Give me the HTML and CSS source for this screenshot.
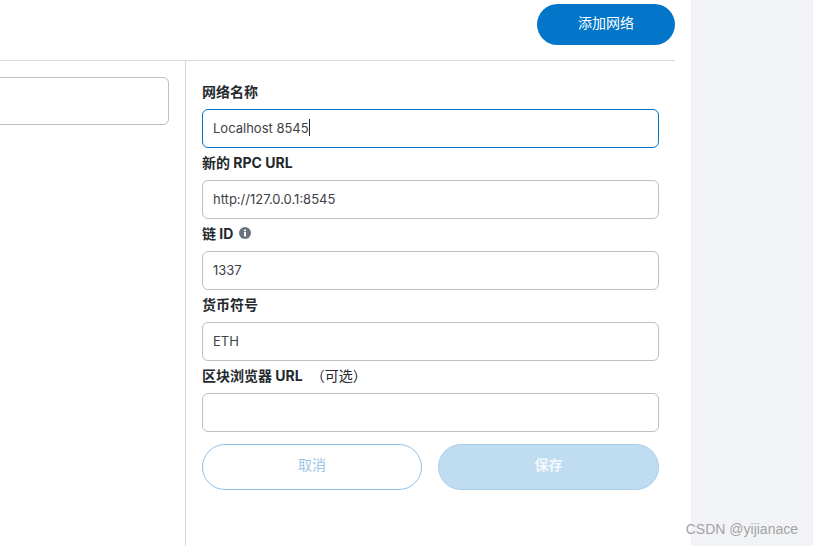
FILE: index.html
```html
<!DOCTYPE html>
<html>
<head>
    <title>添加网络</title>
    <link rel="stylesheet" href="styles.css">
</head>
<body>
    <div class="page">
        <div class="panel">
            <div class="top-bar">
                <button class="btn btn-add">添加网络</button>
            </div>
            <div class="content">
                <div class="network-list">
                    <div class="search-box"></div>
                </div>
                <div class="network-form">
                    <div class="field">
                        <label class="field-label">网络名称</label>
                        <div class="input input-focus">Localhost 8545<span class="caret"></span></div>
                    </div>
                    <div class="field">
                        <label class="field-label">新的 RPC URL</label>
                        <div class="input">http://127.0.0.1:8545</div>
                    </div>
                    <div class="field">
                        <label class="field-label">链 ID<svg class="info-icon" viewBox="0 0 12 12" width="12" height="12">
                                <circle cx="6" cy="6" r="6" fill="#6a737d"/>
                                <rect x="5" y="5" width="2" height="4.4" fill="#fff"/>
                                <rect x="5" y="2.6" width="2" height="1.6" fill="#fff"/>
                            </svg></label>
                        <div class="input">1337</div>
                    </div>
                    <div class="field">
                        <label class="field-label">货币符号</label>
                        <div class="input">ETH</div>
                    </div>
                    <div class="field">
                        <label class="field-label">区块浏览器 URL<span class="optional">（可选）</span></label>
                        <div class="input"></div>
                    </div>
                    <div class="buttons">
                        <button class="btn btn-cancel">取消</button>
                        <button class="btn btn-save">保存</button>
                    </div>
                </div>
            </div>
        </div>
        <div class="side"></div>
    </div>
    <div class="watermark">CSDN @yijianace</div>
</body>
</html>
```

FILE: styles.css
```css
body {
    font-family: Inter, "Noto Sans CJK SC", sans-serif;
    margin: 0;
    height: 546px;
    overflow: hidden;
    background: #f2f3f6;
    color: #24292e;
}
.page {
    display: flex;
    height: 546px;
}
.panel {
    width: 691px;
    padding-right: 16px;
    box-sizing: border-box;
    background: white;
    display: flex;
    flex-direction: column;
}
.side {
    flex: 1;
    background: #f2f3f6;
}
.top-bar {
    height: 61px;
    box-sizing: border-box;
    padding-top: 4px;
    display: flex;
    justify-content: flex-end;
    border-bottom: 1px solid #d9d9d9;
}
.content {
    flex: 1;
    display: flex;
}
.network-list {
    width: 186px;
    box-sizing: border-box;
    padding: 16px 16px 0 0;
    border-right: 1px solid #d6d9dc;
}
.search-box {
    height: 48px;
    box-sizing: border-box;
    margin-left: -10px;
    border: 1px solid #bbc0c5;
    border-radius: 6px;
}
.network-form {
    width: 457px;
    margin-left: 16px;
    padding-top: 20px;
}
.field {
    height: 71px;
}
.field-label {
    display: flex;
    align-items: center;
    height: 20px;
    box-sizing: border-box;
    padding-top: 2px;
    margin-bottom: 8px;
    font-size: 14px;
    font-weight: 700;
    line-height: 18px;
    white-space: nowrap;
}
.info-icon {
    margin-left: 6px;
    margin-bottom: 2px;
}
.optional {
    margin-left: 8px;
    font-weight: 400;
}
.input {
    display: flex;
    align-items: center;
    height: 39px;
    box-sizing: border-box;
    padding-left: 10px;
    padding-bottom: 2px;
    border: 1px solid #bbc0c5;
    border-radius: 6px;
    font-size: 13px;
    color: #3c4248;
}
.input-focus {
    border-color: #0376c9;
}
.caret {
    width: 1px;
    height: 17px;
    background: #24292e;
}
.btn {
    padding: 0 0 6px;
    border-radius: 100px;
    font-family: inherit;
    font-size: 14px;
    box-sizing: border-box;
}
.btn-add {
    width: 138px;
    height: 41px;
    border: none;
    background: #0376c9;
    color: white;
}
.buttons {
    display: flex;
    justify-content: space-between;
    margin-top: 8px;
}
.btn-cancel {
    width: 220px;
    height: 46px;
    border: 1px solid #8fc1e8;
    background: white;
    color: #9cc5e6;
}
.btn-save {
    width: 221px;
    height: 46px;
    border: 1px solid #a5cdeb;
    background: #c0dcf1;
    color: #f2f8fc;
    font-weight: 700;
}
.watermark {
    position: absolute;
    right: 15px;
    bottom: 9px;
    font-family: "Liberation Sans", sans-serif;
    font-size: 14px;
    color: #a3a3a3;
}
```
